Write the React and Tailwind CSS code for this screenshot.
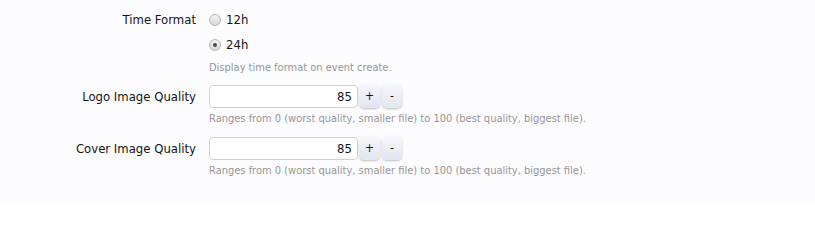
import React, { useState } from 'react';

const font = { fontFamily: '"DejaVu Sans Condensed", "DejaVu Sans", sans-serif' };

const Radio = ({ checked, label, onClick }) => (
  <label onClick={onClick} className="flex items-center gap-[5px] h-[25px] cursor-pointer">
    <span className="w-[12px] h-[12px] rounded-full border border-[#b5b5b5] bg-gradient-to-b from-[#f3f3f3] to-[#d9d9d9] flex items-center justify-center">
      {checked && <span className="w-[4px] h-[4px] rounded-full bg-[#4d4d4d]" />}
    </span>
    <span className="text-[13px] text-[#141414]">{label}</span>
  </label>
);

const Spinner = ({ value, setValue }) => (
  <div className="flex items-center h-[23px]">
    <div className="w-[149px] h-[23px] border border-[#d2d2d6] rounded-[4px] bg-white flex items-center justify-end pr-[5px] text-[13px] text-[#141414]">
      {value}
    </div>
    <button
      onClick={() => setValue(Math.min(100, value + 1))}
      className="ml-[1px] w-[21px] h-[24px] -mt-[1px] rounded-[5px] bg-gradient-to-b from-[#f6f7fc] to-[#e3e5ef] shadow-[0_1px_2px_rgba(0,0,0,0.25)] text-[12px] text-[#141414] flex items-center justify-center"
    >
      +
    </button>
    <button
      onClick={() => setValue(Math.max(0, value - 1))}
      className="ml-[2px] w-[20px] h-[24px] -mt-[1px] rounded-[5px] bg-gradient-to-b from-[#f6f7fc] to-[#e3e5ef] shadow-[0_1px_2px_rgba(0,0,0,0.25)] text-[12px] text-[#141414] flex items-center justify-center"
    >
      -
    </button>
  </div>
);

const Hint = ({ children }) => (
  <p className="text-[11px] text-[#969696] leading-[14px] mt-[4px]">{children}</p>
);

export default function App() {
  const [format, setFormat] = useState('24h');
  const [logo, setLogo] = useState(85);
  const [cover, setCover] = useState(85);

  return (
    <div style={font} className="w-[815px] h-[202px] bg-[#fcfcfe] pt-[7px]">
      {/* Time Format */}
      <div className="flex">
        <div className="w-[196px] text-right text-[13px] text-[#141414] leading-[25px]">Time Format</div>
        <div className="ml-[13px]">
          <Radio checked={format === '12h'} label="12h" onClick={() => setFormat('12h')} />
          <Radio checked={format === '24h'} label="24h" onClick={() => setFormat('24h')} />
          <Hint>Display time format on event create.</Hint>
        </div>
      </div>

      {/* Logo Image Quality */}
      <div className="flex mt-[10px]">
        <div className="w-[196px] text-right text-[13px] text-[#141414] leading-[23px]">Logo Image Quality</div>
        <div className="ml-[13px]">
          <Spinner value={logo} setValue={setLogo} />
          <Hint>Ranges from 0 (worst quality, smaller file) to 100 (best quality, biggest file).</Hint>
        </div>
      </div>

      {/* Cover Image Quality */}
      <div className="flex mt-[11px]">
        <div className="w-[196px] text-right text-[13px] text-[#141414] leading-[23px]">Cover Image Quality</div>
        <div className="ml-[13px]">
          <Spinner value={cover} setValue={setCover} />
          <Hint>Ranges from 0 (worst quality, smaller file) to 100 (best quality, biggest file).</Hint>
        </div>
      </div>
    </div>
  );
}
